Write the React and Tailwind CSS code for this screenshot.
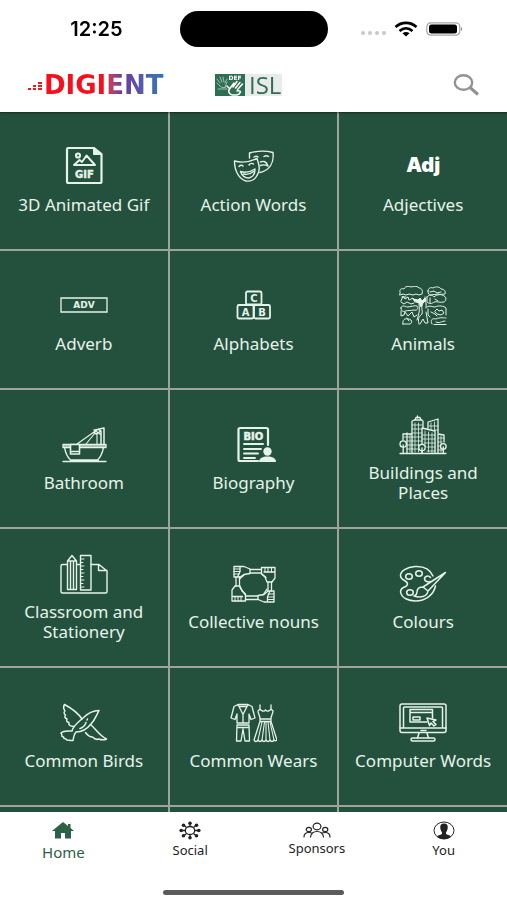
import React, { useState } from 'react';

// All category icons share one 48x40 canvas
const Icon = ({ children, width = 1.5 }) => (
  <svg
    viewBox="0 0 48 40"
    className="h-10 w-12 shrink-0"
    fill="none"
    stroke="currentColor"
    strokeWidth={width}
    strokeLinecap="round"
    strokeLinejoin="round"
    aria-hidden="true"
  >
    {children}
  </svg>
);

const GifIcon = () => (
  <Icon width={2.2}>
    <path d="M8.500 1H34l7.500 6v27.500a1.500 1.500 0 0 1-1.500 1.500H8.500A1.500 1.500 0 0 1 7 34.500v-32A1.500 1.500 0 0 1 8.500 1z" />
    <path d="M33.500 1v6.500h8z" fill="currentColor" strokeWidth="1" />
    <circle cx="18" cy="8.500" r="2" />
    <path d="M14 18l5.500-5 2.500 2 4.500-6.500L35 18z" strokeWidth="1.900" />
    <text x="24.500" y="31" textAnchor="middle" fontSize="10" fontWeight="800" fill="currentColor" stroke="currentColor" strokeWidth=".4" className="font-['DejaVu_Sans']">GIF</text>
  </Icon>
);

const MasksIcon = () => (
  <Icon width={1.4}>
    <path d="M5.500 14c7 2 15 1 22.500-2.500 2.500 7 3.500 12 0 17-2 4-6 6-11 5.500-7-2-11.500-10-11.500-20z" />
    <path d="M20.500 11V6c7-2 16-2.500 23.500-.5 1 10-3 18-13 20" />
    <path d="M10 19.500c1-1.500 3-1.500 4-.5M20 18c1-1.500 3-2 4.500-1M11.500 24.500c5 1.500 10 .5 14.500-2.500 0 5-2 8-6 9-4 0-7-2-8.500-6.500z" />
    <path d="M14.500 27c4 1 7 0 10-2.500M25 10c1.500-1 3-1 4 0M35 9.500c1.500-1 3-1 4.500 0M31.500 15c3-1.500 6-.5 7.500 4-3-1.500-5-1.500-7.500-.5" />
  </Icon>
);

const AdjIcon = () => (
  <span className="flex h-10 items-center pb-1 font-['Inter','Open_Sans',sans-serif] text-xl font-black text-white">Adj</span>
);

const AdvIcon = () => (
  <Icon width={1.3}>
    <path d="M1 12h46v14H1z" strokeLinejoin="miter" />
    <text x="24" y="22" textAnchor="middle" fontSize="9" fontWeight="700" fill="currentColor" stroke="none" className="font-['DejaVu_Sans']">ADV</text>
  </Icon>
);

const BlocksIcon = () => (
  <Icon width={1.8}>
    <rect x="17" y="5.500" width="15.500" height="13" rx="1.500" />
    <rect x="8.500" y="19" width="16" height="13.500" rx="1.500" />
    <rect x="25" y="19" width="16" height="13.500" rx="1.500" />
    <g fontSize="10" fontWeight="700" fill="currentColor" stroke="none" textAnchor="middle" className="font-['DejaVu_Sans']">
      <text x="24.800" y="15.800">C</text>
      <text x="16.500" y="29.500">A</text>
      <text x="33" y="29.500">B</text>
    </g>
  </Icon>
);

const AnimalsIcon = () => (
  <Icon width={1}>
    <path d="M1 6c-1-3 2-4 4-3 1-3 5-3 7-2 3-1 7-1 8 1 3 0 4 3 3 6l-3 1-3-1-3 1-4-1-3 1-3-1-3 1z" />
    <path d="M29 5c0-3 3-4 5-3 3-2 7-1 8 1 3 0 5 2 4 5-3 0-4 1-7 0-3 1-5 0-7 1-2 0-3-1-3-4z" />
    <path d="M2 15l2-5 2 3 3-2 1 3 4-2 2 4M2 16l3 2 3-2 4 2 3-1M3 11h4M31 6l4-1 3 2 4-1" />
    <path d="M14 13l5 1 2-2 2 3 3-3 1 2-3 3-2 4-2-4-3-1z" fill="currentColor" />
    <path d="M20 18c1 6 0 10-2 16M23 19c-1 4 1 6 0 9-4 3-4 6-3 10M26 11c0 5 2 6 1 11M27 26l2 11h-3l-2-4-3 5" />
    <path d="M28 11c2-3 6-2 7 0 3-3 8-3 10-1 3 1 2 5 0 6-5 1-7-1-10 0-2 2-5 2-7 0v-5zM31 12v5M36 13l3 2" />
    <path d="M2 22c0-3 4-2 6-1 4 0 8-2 10-1 2 2 0 5-3 4-4 1-6 0-8 1-3 1-5 0-5-3zM2 25v5l3-1 1-3 3 4 4-4 2 5 3-2" />
    <path d="M4 38c-1-4 2-6 5-5 4 0 5 4 2 5H4zM8 32l2 3" />
    <path d="M28 21c3-2 5 0 8 0 4-2 9-1 11 1v7M29 23v6l2 2M36 25l2-2 2 2 3-1 2 3-3 2-4-1zM32 26l4 2 2 2" />
    <path d="M33 38c-2-4 0-6 4-5 4-2 9-1 10-1M37 36c3 2 6-1 9-1M35 38.500h12" />
  </Icon>
);

const BathIcon = () => (
  <Icon width={1.3}>
    <path d="M3 19.500h43v3H3zM4.500 22.500c1 5 2 9 6 12.500h27c4-3.500 5-7.500 6-12.500M3 36.500h43M11 35l-1 1.500M38 35l1 1.500" />
    <path d="M4 21h41" strokeWidth="2" opacity=".6" />
    <rect x="10.500" y="19.500" width="9" height="9.500" fill="#24513d" strokeWidth="1.600" />
    <path d="M11 26.500h8" />
    <path d="M41 19V6M44 19V3l-9 2M34 5l6 4M33.500 7.500l5-3.500 2 2-4 3z" strokeWidth="1.500" />
    <path d="M34 7L17 19M35 8l-9 11M37 9v10" strokeWidth="1.100" />
  </Icon>
);

const BioIcon = () => (
  <Icon width={2.2}>
    <path d="M29 36H11a1.500 1.500 0 0 1-1.500-1.500v-30A1.500 1.500 0 0 1 11 3h26.500A1.500 1.500 0 0 1 39 4.500V20" />
    <text x="24.300" y="14.500" textAnchor="middle" fontSize="10" fontWeight="800" fill="currentColor" stroke="currentColor" strokeWidth=".5" className="font-['DejaVu_Sans']">BIO</text>
    <path d="M15 19h19M15 24h17M15 28.500h14M15 33h11" strokeWidth="1.900" />
    <circle cx="38.500" cy="26.500" r="4.200" fill="currentColor" stroke="none" />
    <path d="M30 37c0-4 4-5.500 8.500-5.500S47 33 47 37z" fill="currentColor" stroke="none" />
  </Icon>
);

const BuildingsIcon = () => (
  <Icon width={1.3}>
    <path d="M1 38.500h46M4 25v-6h9M13 38V6l3-1 1-2.500h4L22 5l2 1v7M15 5h8M18.500 1v2" />
    <path d="M23 38V13l13 3v22M29 13V7l10-3v14M39 19l6 1v7M8 18v20M39 19v19" />
    <path d="M16 8v29M19.500 8v29M26 16v16M29.500 17v20M33 18v20M32 8v6M35.500 7v8M42 21v16M5 22h8M8 26h5M8 30h5M8 34h5M11 19v18M13 10h10M13 14h10M13 18h10M13 22h10M13 26h10M13 30h8M13 34h7M23 20h13M23 24h13M25 28h11M28 32h8M28 36h8M30 11h9M36 15h3M39 23h6M39 27h4M39 31h3M39 35h5" strokeWidth=".8" />
    <g fill="#24513d">
      <circle cx="4.200" cy="29" r="3.200" />
      <circle cx="23" cy="32.500" r="3.200" />
      <circle cx="44.300" cy="31.500" r="2.800" />
    </g>
    <path d="M4.200 30v8M23 33v5M44.300 32v6" />
  </Icon>
);

const StationeryIcon = () => (
  <Icon width={1.4}>
    <path d="M7 10.500H2.500A1.500 1.500 0 0 0 1 12v25.500A1.500 1.500 0 0 0 2.500 39h43a1.500 1.500 0 0 0 1.500-1.500V17l-8-6.500h-8M17 10.500h3M38.500 11v5.500H47" />
    <path d="M7.500 7L12 1.500 16.500 7v28.500h-9zM10.500 8v27M13.500 8v27M7.500 7h9" />
    <path d="M20.500 1.500H31v34.500H20.500z" />
    <path d="M21 5h3M21 8.500h2M21 12h3M21 15.500h2M21 19h3M21 22.500h2M21 26h3M21 29.500h2M21 33h3" strokeWidth="1" />
  </Icon>
);

const HandsIcon = () => (
  <Icon width={1.3}>
    <path d="M5 2.500h10l6 2.500v4.500l-6 1-4 2.500H5zM11 2.500v5L8.500 13" />
    <path d="M46 3.500V14l-3 4h-5l-2-5-3.500-3V3.500zM35 8h11" />
    <path d="M3 37V26l3-4h5l2 5 3.500 3v7zM3 32.500h10.500" />
    <path d="M45 38H35l-6-2.500v-4l6-1 4-3.500h6zM38.500 38v-5l2.500-6" />
    <path d="M5 5h6M5 7.500h6M5 10h5M36 4v4M39 4v4M42.500 4v4M6 33v4M9 33v4M12 33v4M39 30h6M39 33h6M39 35.500h6" strokeWidth="1" />
    <path d="M21 5.500h11.500M21 9h11.500M7 13v9M10.500 13v9M39 18v9M42.500 18v9M16.500 32H29M16.500 35.500H29" />
    <path d="M15 11l-4.500 4M11 23.500l5.500 7.500M33 10l4 3.500M38 25l-4 6" />
  </Icon>
);

const PaletteIcon = () => (
  <Icon width={1.5}>
    <path d="M34 12C31 5 24 2 16 2.500 8 3 1 7 1.500 12c.5 5 7 4 7 8s-7 2-7 8c1 6 8 9 15 9 10 0 18-6 20-15" />
    <ellipse cx="10" cy="12.500" rx="3.300" ry="2.800" />
    <ellipse cx="20" cy="9.500" rx="3.300" ry="2.800" />
    <path d="M31 17.500c-2 1-5 0-5.500-2.500 0-3 4-4 6-1.500" />
    <ellipse cx="11" cy="28.500" rx="3.300" ry="2.800" />
    <path d="M24 23L46.500 8.500 29 27zM24 23c-4 0-6 2-6 5s-1 3-3 4c6 2 13 1 14-5z" />
  </Icon>
);

const BirdIcon = () => (
  <Icon width={1.5}>
    <path d="M39 7.500c-6 0-11 2.500-16 7.500-5 4-10 8-11 13-4 0-8-1-11 2 1 1 1 2 1 3.500 1 0 2 1 2 2 1 0 2 0 3 1.500 2 0 4 1 6 .5 1-3 0-5 3-8.500 6 0 11-3 15-8 4-4 5-8 8-13.500z" />
    <path d="M22 16C18 10 11 5 4.500 1.500 3 4 3.500 6 5 8c-1.500 1-1 3 .5 4-1.500 2-.5 3 1.500 4-1 2 0 3 2 3.500-1 2 1 4 5 4" />
    <path d="M30.500 21.500c5 4 8.500 11 16 14.500-3 1.500-5 1-8 0-2 1-4 0-6-2-3 0-4.500-1-7-4.500M20 25.500c3-1 5-3 6-6M27 17l.5-1" />
  </Icon>
);

const ClothesIcon = () => (
  <Icon width={1.3}>
    <path d="M9 1.500h10l4 2L26 15l-4 1.500-2-5.500v9H8v-9l-2 5.500L2 15 5 3.500zM9 1.500l5 10 5-10M10 3.500h8M14 11.500V20" />
    <path d="M8 22h12l.5 16H16l-2-12-2 12H7.500zM8 24.500h12" />
    <path d="M31 2v4M42 2v4M31 6c1 2 4 3 5.500 1C38 9 41 8 42 6l2 2c0 3-2 4-2 8H31c0-4-2-5-2-8zM31 16h11v2.500H31zM31 18.500L25 37c1 2 3 2 4 0 1 2 3 2 4 0 1 2 3 2 4 0 1 2 3 2 4 0 1 2 3 2 4 0 1 1 2 1 3 0l-6-18.500" />
    <path d="M33 19l-4 18M35.500 19L33 37M37 19v18M39 19l2 18M41 19l4 18" strokeWidth="1.100" />
  </Icon>
);

const ComputerIcon = () => (
  <Icon width={1.5}>
    <rect x="1" y="1" width="46" height="28.500" rx="2" />
    <path d="M4.500 25V5a1 1 0 0 1 1-1h37a1 1 0 0 1 1 1v20M1 25h46M22 27.500h5M20 30l-1.500 5M28 30l1.500 5" />
    <rect x="12" y="35" width="24" height="3" rx="1.500" />
    <path d="M28 19H11V6.500h22.500V15M11 9.500h22.500" />
    <rect x="14" y="14" width="7" height="3" />
    <path d="M28 15l9 2-3 1.500 3 3-2 1.500-3-3-1.500 2.500z" />
  </Icon>
);

const categories = [
  { name: '3D Animated Gif', icon: GifIcon },
  { name: 'Action Words', icon: MasksIcon },
  { name: 'Adjectives', icon: AdjIcon },
  { name: 'Adverb', icon: AdvIcon },
  { name: 'Alphabets', icon: BlocksIcon },
  { name: 'Animals', icon: AnimalsIcon },
  { name: 'Bathroom', icon: BathIcon },
  { name: 'Biography', icon: BioIcon },
  { name: 'Buildings and Places', icon: BuildingsIcon },
  { name: 'Classroom and Stationery', icon: StationeryIcon },
  { name: 'Collective nouns', icon: HandsIcon },
  { name: 'Colours', icon: PaletteIcon },
  { name: 'Common Birds', icon: BirdIcon },
  { name: 'Common Wears', icon: ClothesIcon },
  { name: 'Computer Words', icon: ComputerIcon },
];

const HomeIcon = () => (
  <svg viewBox="0 0 24 20" className="h-5 w-6" fill="currentColor" aria-hidden="true">
    <path d="M12 2L1 11h3v7.500h6v-5.500h4v5.500h6V11h3L19.500 8V4H17v2z" />
  </svg>
);

const SocialIcon = () => (
  <svg viewBox="0 0 24 20" className="h-5 w-6" fill="currentColor" stroke="currentColor" strokeWidth="1.300" aria-hidden="true">
    <ellipse cx="12" cy="10.500" rx="4.700" ry="4" fill="none" />
    <path d="M12 3v3.500M12 14.500V18M3 10.500h4M17 10.500h4M5.500 5l3 2.500M18.500 5l-3 2.500M5.500 16l3-2.500M18.500 16l-3-2.500" />
    <g stroke="none">
      <circle cx="12" cy="3.200" r="1.800" />
      <circle cx="12" cy="17.800" r="1.800" />
      <circle cx="3.200" cy="10.500" r="1.800" />
      <circle cx="20.800" cy="10.500" r="1.800" />
      <circle cx="5.500" cy="5.300" r="1.800" />
      <circle cx="18.500" cy="5.300" r="1.800" />
      <circle cx="5.500" cy="15.700" r="1.800" />
      <circle cx="18.500" cy="15.700" r="1.800" />
    </g>
  </svg>
);

const SponsorsIcon = () => (
  <svg viewBox="0 0 28 18" className="h-[18px] w-7" fill="none" stroke="currentColor" strokeWidth="1.200" strokeLinecap="round" aria-hidden="true">
    <ellipse cx="14" cy="6.500" rx="3.900" ry="3.300" />
    <ellipse cx="5.800" cy="9.500" rx="2.600" ry="2.200" />
    <ellipse cx="22.200" cy="9.500" rx="2.600" ry="2.200" />
    <path d="M7.500 17c.5-3.500 3-5.500 6.500-5.500s6 2 6.500 5.500M1 17c0-3 2-4.500 5-4.500 1.500 0 2.500.4 3.200 1M27 17c0-3-2-4.500-5-4.500-1.500 0-2.500.4-3.200 1" />
  </svg>
);

const YouIcon = () => (
  <svg viewBox="0 0 24 20" className="h-5 w-6" aria-hidden="true">
    <ellipse cx="12" cy="10.500" rx="10" ry="8.500" fill="none" stroke="currentColor" strokeWidth="1" />
    <path d="M12 3.500c-3 0-4.200 2-3.700 4.500.2 2.500 1.200 3.500 1.700 4.500V14c-1 1-3.500 1.200-5 2.200 2 2 4.500 2.800 7 2.800s5-.8 7-2.800c-1.500-1-4-1.200-5-2.200v-1.500c.5-1 1.500-2 1.700-4.500.5-2.500-.7-4.500-3.700-4.500z" fill="currentColor" />
  </svg>
);

const tabs = [
  { name: 'Home', icon: HomeIcon },
  { name: 'Social', icon: SocialIcon },
  { name: 'Sponsors', icon: SponsorsIcon },
  { name: 'You', icon: YouIcon },
];

const StatusBar = () => (
  <div className="grid h-[58px] grid-cols-3 items-center">
    <span className="pl-6 text-center font-['Inter',sans-serif] text-xl font-semibold text-black">12:25</span>
    <div className="h-9 w-[148px] justify-self-center rounded-full bg-black" />
    <div className="flex items-center gap-2 justify-self-end pr-11">
      <div className="flex gap-[3px] pt-2">
        {[0, 1, 2, 3].map((dot) => (
          <span key={dot} className="size-1 rounded-xs bg-[#c8c8c8]" />
        ))}
      </div>
      <svg viewBox="0 0 24 16" className="h-4 w-6" fill="none" stroke="black" strokeWidth="2.600" aria-hidden="true">
        <path d="M1.500 6c6-5.500 15-5.500 21 0M5.500 10c4-3.600 9-3.600 13 0" />
        <path d="M8.500 12.300c2-1.800 5-1.800 7 0L12 15.500z" fill="black" stroke="none" />
      </svg>
      <svg viewBox="0 0 37 14" className="h-[14px] w-[37px]" aria-hidden="true">
        <rect x=".8" y=".8" width="33" height="12.400" rx="4" fill="none" stroke="#a5a5a5" strokeWidth="1.200" />
        <rect x="3" y="2.500" width="28" height="9" rx="2.500" fill="black" />
        <path d="M35 5c1.500.5 1.500 3.500 0 4z" fill="#888" />
      </svg>
    </div>
  </div>
);

const DigientLogo = () => (
  <div className="flex w-[165px] items-center gap-px">
    <svg viewBox="0 0 15 12" className="h-3 w-[15px]" fill="#f01a1a" aria-hidden="true">
      <path d="M0 9h3v2H0zM5 9h3v2H5zM5 6h3v2H5zM10 9h4v2h-4zM10 6h4v2h-4zM10 3h4v2h-4z" />
    </svg>
    <span className="bg-linear-to-r from-[#f5101c] from-50% via-[#6a3a9c] via-65% to-[#1d78bd] bg-clip-text font-['DejaVu_Sans',sans-serif] text-[26px] leading-7 font-bold text-transparent">
      DIGIENT
    </span>
  </div>
);

const IslLogo = () => (
  <div className="flex h-[22px] items-center bg-[#e9ebea]">
    <svg viewBox="0 0 30 22" className="h-[22px] w-[30px]" fill="none" stroke="white" strokeLinecap="round" aria-hidden="true">
      <path d="M0 0h30v22H0z" fill="#2e6e52" stroke="none" />
      <text x="20" y="6" textAnchor="middle" fontSize="6" fontWeight="700" fill="white" stroke="none" className="font-['DejaVu_Sans']">DEF</text>
      <path d="M2 5l3 4M5 3l2 5M8 3l1 5M12 5l-2 4M2 9l3 3c2 2 4 2 6 1M12 8l-2 5M3 15h9" strokeWidth=".8" opacity=".7" />
      <path d="M16 20.500c-2-1-3-3-1.500-5.500L19 9M18 13l4-5.500M20.500 14L25 8.500M22.500 15.500l5-5.500M22 17c6-1 3 3 0 4h-5M14 14l-2-2" strokeWidth="1.500" />
    </svg>
    <span className="pr-px pl-1 font-['Open_Sans',sans-serif] text-2xl leading-[22px] text-[#2e6e52]">ISL</span>
  </div>
);

const App = () => {
  const [activeTab, setActiveTab] = useState('Home');

  return (
    <div className="flex h-screen flex-col bg-white font-['Noto_Sans','Open_Sans',sans-serif]">
      <header className="relative z-10 bg-white shadow-[0_1px_2px_rgba(0,0,0,0.5)]">
        <StatusBar />
        <div className="flex h-[54px] items-center pr-7 pl-7">
          <DigientLogo />
          <div className="ml-[22px]">
            <IslLogo />
          </div>
          <button type="button" aria-label="Search" className="ml-auto text-[#929292]">
            <svg viewBox="0 0 26 22" className="h-[22px] w-[26px]" fill="none" stroke="currentColor" strokeWidth="2.400" aria-hidden="true">
              <ellipse cx="10.500" cy="8.500" rx="8.700" ry="7.200" />
              <path d="M17 13.500l8 7" strokeWidth="3" />
            </svg>
          </button>
        </div>
      </header>

      <main className="min-h-0 flex-1 overflow-y-auto bg-[#9da49c] [scrollbar-width:none]">
        <div className="grid auto-rows-[137px] grid-cols-3 gap-[2px]">
          {categories.map(({ name, icon: CategoryIcon }) => (
            <button
              key={name}
              type="button"
              className="flex flex-col items-center justify-center gap-2 bg-[#24513d] px-2 text-[#e6f3ea]"
            >
              <CategoryIcon />
              <span className="text-[17px] leading-5">{name}</span>
            </button>
          ))}
          {/* empty tiles for the next row */}
          {[0, 1, 2].map((n) => (
            <div key={n} className="bg-[#24513d]" />
          ))}
        </div>
      </main>

      <nav className="grid h-[88px] grid-cols-4 items-start bg-white pt-2">
        {tabs.map(({ name, icon: TabIcon }) => (
          <button
            key={name}
            type="button"
            onClick={() => setActiveTab(name)}
            className={`flex flex-col items-center ${activeTab === name ? 'text-[15px] leading-6 text-[#2c6049]' : 'text-[13px] leading-5 text-[#222]'}`}
          >
            <TabIcon />
            <span>{name}</span>
          </button>
        ))}
        <div className="col-span-4 mt-5 h-[5px] w-[181px] justify-self-center rounded-full bg-[#5c5c5c]" />
      </nav>
    </div>
  );
};

export default App;
